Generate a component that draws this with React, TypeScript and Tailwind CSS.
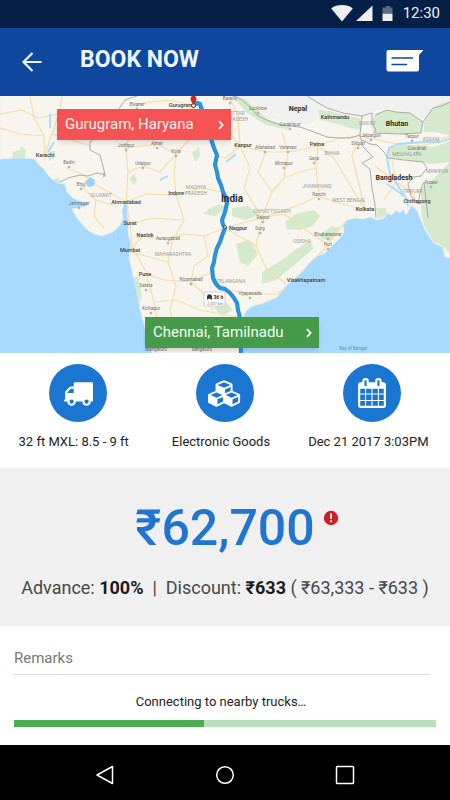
import type { ReactNode } from "react";

const LAND_WEST =
  "M0 -2 H452 V162 L445 161 443 151 438 149 433 146 427 137 423 129 420 122 417 114 411 109 409 114 406 119 403 113 400 117 396 114 392 119 388 117 384 122 377 124 370 121 363 123 355 122 347 124 343 129 344 136 339 143 333 149 325 157 317 160 310 166 300 178 292 184 287 189 277 201 270 204 263 207 252 210 246 215 243 222 241 240 242 259 H152 L149 245 143 225 140 212 137 196 133 179 129 162 131 149 128 136 129 128 127 118 128 110 125 107 122 114 123 122 120 129 113 136 102 140 95 138 89 135 83 129 77 122 72 113 78 112 86 110 90 106 83 106 73 102 67 96 65 88 59 87 53 84 49 80 43 72 38 68 35 63 25 62 13 62 0 63Z";

const GREENS = [
  "M372 24 376 18 387 14 396 16 410 17 423 26 421 37 400 38 373 36Z",
  "M432 14 440 8 452 5 V40 L436 36 424 36 424 26Z",
  "M388 51 400 49 418 49 434 51 452 44 V66 L430 68 410 64 389 62Z",
  "M421 92 432 84 452 64 V160 L444 151 433 145 424 129 421 115Z",
  "M318 14 330 15 343 19 360 22 362 34 350 32 338 28 320 24Z",
  "M234 2 245 3 256 13 268 24 290 30 288 34 264 28 246 16Z",
  "M12 62 13 56 20 54 21 50 26 54 25 62Z",
  "M47 56 55 55 55 61 49 65Z",
  "M53 84 58 82 62 86 57 88Z",
  "M192 57 199 51 200 60 195 66Z",
  "M285 126 296 118 314 114 320 120 313 130 300 134 287 133Z",
  "M236 148 250 144 258 158 248 170 240 166Z",
  "M262 176 279 166 298 152 309 145 314 152 298 166 276 184 262 188Z",
  "M318 140 332 130 340 132 330 146Z",
  "M376 112 386 112 387 119 378 123Z",
  "M210 112 220 108 227 112 215 120 203 118Z",
  "M232 112 248 110 260 118 246 124 232 120Z",
  "M130 82 134 78 137 84 133 89Z",
  "M134 182 138 180 142 200 139 208Z",
  "M214 212 226 206 233 214 222 220Z",
];

const ROADS = [
  "M0 18 22 14 38 22 58 18 80 26 118 20",
  "M30 0 34 22 44 40 45 64 M44 40 20 38 0 32",
  "M62 0 58 20 52 38 45 58 M52 38 78 46 90 50",
  "M118 14 130 24 150 20 170 28 193 10",
  "M193 10 172 4 150 6 137 8",
  "M137 8 134 26 126 52 128 76 126 106 130 128 132 150 146 176 154 206 160 240",
  "M126 52 157 48 176 58 192 40 193 10",
  "M176 58 174 78 176 99 184 124 172 146 168 166 176 190 170 214 178 250",
  "M126 106 146 98 176 99 200 92 223 96",
  "M202 14 222 26 240 50 266 56 288 56 318 50 334 62 365 114",
  "M240 50 226 62 217 60 M240 50 250 72 244 92 262 122 284 118 300 130 327 148",
  "M230 2 238 20 240 50 M266 56 258 76 272 96 262 122",
  "M318 50 316 72 319 100 342 108 365 114 M319 100 296 110 262 122",
  "M360 40 352 60 358 84 365 114 M318 50 340 42 360 40 388 46 418 52 450 40",
  "M225 132 246 126 262 122 M225 132 204 140 184 138 168 144 143 140 130 154",
  "M146 178 164 184 191 186 212 176 M191 186 206 200 213 215",
  "M220 192 248 198 278 198 300 178 327 150 345 126",
  "M154 206 176 204 200 214 240 222 M66 72 82 78 98 90 126 106",
  "M81 90 96 104 94 120 104 132 M96 104 116 110 M130 128 152 122 184 124",
  "M392 64 396 86 412 96 417 108 M375 70 396 86 M396 86 384 104",
  "M143 70 160 76 176 58 M143 70 128 76 M157 48 146 32 150 20",
  "M288 56 284 82 272 96 M316 72 300 76 284 82 M282 36 288 56",
  "M204 140 208 160 194 170 191 186 M168 166 146 160 130 156",
  "M262 122 256 150 266 172 286 188 M256 150 225 132",
];

const RIVERS = [
  "M452 42 440 46 424 46 410 47 398 48 389 52 387 62 390 78 398 90 406 102 408 110",
  "M387 88 396 94 404 100",
  "M50 18 50 32 M54 46 48 56",
  "M226 66 236 58 M168 80 160 84",
];

const BORDERS = [
  "M137 0 125 4 118 14 112 28 100 38 90 46 90 54 100 59 103 70 105 79 97 77 88 80 80 79 68 82 60 86",
  "M233 -1 242 4 250 11 258 20 267 24 280 29 300 31 314 36 327 41 340 42 350 42 360 39 362 20 343 17 327 12 310 2 306 -1",
  "M362 20 372 17 372 28 376 34 374 37 400 38 421 37 423 26 410 17 396 16 387 14 375 19",
  "M423 26 433 12 442 10 452 5",
  "M360 39 363 51 373 61 362 67 370 73 372 92 375 109 376 122",
  "M362 44 370 48 377 49 384 56 388 62 404 64 423 66 427 72 421 80 413 81 408 88 411 100 418 108 421 92 424 86 428 122",
];

const ROUTE =
  "M194 9 197 7 200 8 202 14 206 28 212 46 214 52 217 59 216 64 215 69 217 76 218 82 221 89 223 96 226 102 227 107 225 116 222 124 223 129 225 132 222 140 220 146 217 152 215 159 214 166 212 172 213 182 216 188 220 192 225 193 230 197 234 202 237 207 238 214 240 222 241 258";

type Label = [x: number, y: number, text: string];

const COUNTRIES: Label[] = [
  [298, 15, "Nepal"],
  [397, 30, "Bhutan"],
  [394, 84, "Bangladesh"],
];

const CITIES: Label[] = [
  [181, 11, "Gurugram"],
  [45, 61, "Karachi"],
  [126, 108, "Ahmedabad"],
  [130, 129, "Surat"],
  [243, 51, "Kanpur"],
  [176, 99, "Indore"],
  [317, 50, "Patna"],
  [335, 23, "Kathmandu"],
  [365, 115, "Kolkata"],
  [417, 107, "Chittagong"],
  [238, 134, "Nagpur"],
  [145, 141, "Nashik"],
  [130, 156, "Mumbai"],
  [145, 180, "Pune"],
  [306, 186, "Visakhapatnam"],
];

const TOWNS: Label[] = [
  [137, 10, "Bikaner"],
  [126, 51, "Jodhpur"],
  [143, 69, "Udaipur"],
  [157, 49, "Ajmer"],
  [176, 57, "Kota"],
  [230, 4, "Bareilly"],
  [258, 14, "Lucknow"],
  [265, 53, "Allahabad"],
  [288, 53, "Varanasi"],
  [284, 69, "Mirzapur"],
  [290, 30, "Gorakhpur"],
  [314, 64, "Gaya"],
  [319, 100, "Ranchi"],
  [358, 49, "Siliguri"],
  [412, 42, "Tezpur"],
  [417, 54, "Guwahati"],
  [431, 88, "Aizawl"],
  [371, 41, "Jalpaiguri"],
  [263, 123, "Raipur"],
  [260, 134, "Durg"],
  [168, 144, "Aurangabad"],
  [191, 185, "Nizamabad"],
  [250, 199, "Vijayawada"],
  [328, 140, "Bhubaneswar"],
  [328, 150, "Puri"],
  [69, 68, "Badin"],
  [81, 90, "Bhuj"],
  [79, 109, "Jamnagar"],
  [146, 191, "Satara"],
  [151, 214, "Kolhapur"],
  [156, 255, "Mangaluru"],
  [202, 255, "Bengaluru"],
];

const STATES: Label[] = [
  [101, 101, "GUJARAT"],
  [237, 19, "UTTAR"],
  [237, 25, "PRADESH"],
  [196, 93, "MADHYA"],
  [196, 99, "PRADESH"],
  [272, 117, "CHHATTISGARH"],
  [332, 59, "BIHAR"],
  [367, 29, "SIKKIM"],
  [431, 45, "ASSAM"],
  [407, 60, "MEGHALAYA"],
  [317, 92, "JHARKHAND"],
  [349, 106, "WEST BENGAL"],
  [413, 97, "TRIPURA"],
  [437, 77, "MANIPUR"],
  [173, 160, "MAHARASHTRA"],
  [231, 187, "TELANGANA"],
  [302, 147, "ODISHA"],
];

function RouteMap() {
  return (
    <svg
      className="block h-full w-full font-[Roboto,sans-serif]"
      viewBox="0 0 450 257"
      preserveAspectRatio="xMidYMid slice"
      role="img"
      aria-label="Route from Gurugram to Chennai"
    >
      <rect width="450" height="257" fill="#a8d9ff" />
      <clipPath id="land">
        <path d={LAND_WEST} />
      </clipPath>
      <path d={LAND_WEST} fill="#f8f5ee" stroke="#e6eee9" strokeWidth="1" />
      <g clipPath="url(#land)">
        <path d="M233 -2 250 9 268 22 300 28 H310 L327 12 362 18 390 12 425 22 452 4 V-2Z" fill="#f0f0ee" />
        {GREENS.map((d) => (
          <path key={d} d={d} fill="#cfe8c6" opacity="0.85" />
        ))}
        {ROADS.map((d) => (
          <path key={d} d={d} fill="none" stroke="#f6dda6" strokeWidth="1.2" strokeLinejoin="round" />
        ))}
        {RIVERS.map((d) => (
          <path key={d} d={d} fill="none" stroke="#a8d9ff" strokeWidth="1.8" strokeLinejoin="round" />
        ))}
        <path d="M85 86 90 81 95 84 94 90 88 91Z M103 76 106 80 103 82Z M122 116 124 107 127 112 126 120Z" fill="#9bd1fb" />
        {BORDERS.map((d) => (
          <path key={d} d={d} fill="none" stroke="#a3a3a0" strokeWidth="0.9" strokeLinejoin="round" />
        ))}
      </g>
      <g textAnchor="middle">
        <g fontSize="5" fill="#9a9a98">
          {STATES.map(([x, y, text]) => (
            <text key={`${text}${x}`} x={x} y={y}>
              {text}
            </text>
          ))}
        </g>
        <g fontSize="4.5" fill="#6f6f6d">
          {TOWNS.map(([x, y, text]) => (
            <g key={text}>
              <text x={x} y={y}>
                {text}
              </text>
              <circle cx={x} cy={y + 3} r="0.9" fill="#fff" stroke="#777" strokeWidth="0.6" />
            </g>
          ))}
        </g>
        <g fontSize="5.5" fontWeight="500" fill="#3c3c3c">
          {CITIES.map(([x, y, text]) => (
            <text key={text} x={x} y={y}>
              {text}
            </text>
          ))}
        </g>
        <g fontSize="7" fontWeight="700" fill="#2c2c2c">
          {COUNTRIES.map(([x, y, text]) => (
            <text key={text} x={x} y={y}>
              {text}
            </text>
          ))}
        </g>
        <text x="353" y="254" fontSize="4.5" fill="#5a93c4">
          Bay of Bengal
        </text>
      </g>
      <path d={ROUTE} fill="none" stroke="#2083cf" strokeWidth="4" strokeLinejoin="round" />
      <path d={ROUTE} fill="none" stroke="#2a97e0" strokeWidth="2.4" strokeLinejoin="round" />
      <circle cx="225" cy="131" r="1.4" fill="#fff" stroke="#444" strokeWidth="0.9" />
      <text x="232" y="106" textAnchor="middle" fontSize="10" fontWeight="700" fill="#2c2c2c">
        India
      </text>
      <circle cx="193.500" cy="9.500" r="2" fill="#fff" stroke="#333" strokeWidth="1" />
      <path d="M193.500 9C192 6 190.500 5 190.500 2.800a3 3 0 0 1 6 0C196.500 5 195 6 193.500 9Z" fill="#d3261f" />
      <g>
        <path d="M204 196H225V210H204Z" fill="#fff" stroke="#c9c9c9" strokeWidth="0.8" />
        <path d="M207 200.500l.8-2h3.400l.8 2v3h-1.200v-.8h-2.600v.8H207Z" fill="#333" />
        <text x="213.500" y="203" fontSize="5" fontWeight="700" fill="#333">
          36 h
        </text>
        <text x="207" y="208.500" fontSize="4" fill="#777">
          2,207 km
        </text>
      </g>
    </svg>
  );
}

function Chevron() {
  return (
    <svg className="h-2.5 w-2" viewBox="0 0 8 10" fill="none" stroke="#fff" strokeWidth="1.8" aria-hidden="true">
      <path d="M2 1.200 5.600 5 2 8.800" />
    </svg>
  );
}

function StatusBar() {
  return (
    <div className="flex h-7 items-center justify-end bg-[#061f47] pr-2.5 pb-0.5 text-[#eef1f6]">
      <svg className="h-4 w-[62px]" viewBox="0 0 62 16" fill="#eceef2" aria-hidden="true">
        <path d="M11 16.500.2 3.400C6-1 16-1 21.800 3.400Z" />
        <path d="M41.500.5V16.500H24.500Z" />
        <path d="M55 1h4v1.500h2.500V8h-10V2.500H55Z" fill="#5f6b84" />
        <path d="M51.500 8.500h10V16h-10Z" />
      </svg>
      <span className="ml-2.5 text-[15px] leading-6">12:30</span>
    </div>
  );
}

function AppBar() {
  return (
    <header className="flex h-17 items-center bg-[#0f479f] pr-6.5 pl-5">
      <button type="button" aria-label="Back" className="flex size-6 items-center justify-center">
        <svg className="size-6" viewBox="0 0 24 24" fill="none" stroke="#e6f3ff" strokeWidth="2.200" aria-hidden="true">
          <path d="M21.500 12H4M12.500 3 3.500 12 12.500 21" />
        </svg>
      </button>
      <h1 className="ml-9 pb-1 text-[23px] leading-7 font-bold text-[#eef7ff]">BOOK NOW</h1>
      <button type="button" aria-label="Messages" className="ml-auto">
        <svg className="h-6 w-[38px]" viewBox="0 0 38 24" aria-hidden="true">
          <path d="M2.500 0H37.500L33 5V19.500Q33 21.500 31 21.500H2.500Q.5 21.500.5 19.500V2Q.5 0 2.500 0Z" fill="#fff" />
          <path d="M5.500 8H27M5.500 14.500H21" stroke="#0f479f" strokeWidth="1.600" />
        </svg>
      </button>
    </header>
  );
}

const TRUCK =
  "M640 1408q0-52-38-90t-90-38-90 38-38 90 38 90 90 38 90-38 38-90zm-384-512h384v-256h-158q-13 0-22 9l-195 195q-9 9-9 22v30zm1280 512q0-52-38-90t-90-38-90 38-38 90 38 90 90 38 90-38 38-90zm256-1088v1024q0 15-4 26.500t-13.500 18.500-16.500 11.500-23.500 6-22.500 2-25.500 0-22.500-.5q0 106-75 181t-181 75-181-75-75-181h-384q0 106-75 181t-181 75-181-75-75-181h-64q-3 0-22.500.5t-25.500 0-22.500-2-23.500-6-16.500-11.500-13.500-18.500-4-26.500q0-26 19-45t45-19v-320q0-8-.5-35t0-38 2.500-34.500 6.500-37 14-30.500 22.500-30l198-198q19-19 50.500-32t58.500-13h160v-192q0-26 19-45t45-19h1024q26 0 45 19t19 45z";
const CUBES =
  "M640 1632l384-192v-314l-384 164v342zm-64-454l404-173-404-173-404 173zm1088 454l384-192v-314l-384 164v342zm-64-454l404-173-404-173-404 173zm-448-293l384-165v-266l-384 164v267zm-64-379l441-189-441-189-441 189zm1088 518v416q0 36-19 67t-52 47l-448 224q-25 14-57 14t-57-14l-448-224q-4-2-7-4-2 2-7 4l-448 224q-25 14-57 14t-57-14l-448-224q-33-16-52-47t-19-67v-416q0-38 21.500-70t56.500-48l434-186v-400q0-38 21.500-70t56.500-48l448-192q23-10 50-10t50 10l448 192q35 16 56.500 48t21.500 70v400l434 186q36 16 57 48t21 70z";
const CALENDAR =
  "M192 1664h288v-288h-288v288zm352 0h320v-288h-320v288zm-352-352h288v-320h-288v320zm352 0h320v-320h-320v320zm-352-384h288v-288h-288v288zm736 736h320v-288h-320v288zm-384-736h320v-288h-320v288zm768 736h288v-288h-288v288zm-384-352h320v-320h-320v320zm-352-864v-288q0-13-9.500-22.500t-22.500-9.500h-64q-13 0-22.500 9.500t-9.500 22.500v288q0 13 9.500 22.500t22.500 9.500h64q13 0 22.500-9.500t9.500-22.500zm736 864h288v-320h-288v320zm-384-384h320v-288h-320v288zm384 0h288v-288h-288v288zm32-480v-288q0-13-9.500-22.500t-22.500-9.500h-64q-13 0-22.500 9.500t-9.500 22.500v288q0 13 9.500 22.500t22.500 9.500h64q13 0 22.500-9.500t9.500-22.500zm384-64v1280q0 52-38 90t-90 38h-1408q-52 0-90-38t-38-90v-1280q0-52 38-90t90-38h128v-96q0-66 47-113t113-47h64q66 0 113 47t47 113v96h384v-96q0-66 47-113t113-47h64q66 0 113 47t47 113v96h128q52 0 90 38t38 90z";

function Detail({ icon, children }: { icon: ReactNode; children: ReactNode }) {
  return (
    <li className="flex flex-col items-center">
      <div className="pl-2">
        <div className="flex size-[58px] items-center justify-center rounded-full bg-[#1b76d2]">{icon}</div>
      </div>
      <span className="mt-2.5 text-[13px] leading-5 whitespace-nowrap text-[#222]">{children}</span>
    </li>
  );
}

export default function App() {
  return (
    <div className="flex min-h-screen w-full flex-col bg-white font-[Roboto,sans-serif]">
      <StatusBar />
      <AppBar />

      <main className="flex flex-1 flex-col">
        <section className="relative h-[257px] overflow-hidden">
          <RouteMap />
          <button
            type="button"
            className="absolute top-[13px] left-[57px] flex h-[31px] w-[174px] items-center justify-between bg-[#f55353] pr-1.5 pl-2 text-[15px] text-[#fff1ee] shadow-md"
          >
            Gurugram, Haryana
            <Chevron />
          </button>
          <button
            type="button"
            className="absolute top-[221px] left-[145px] flex h-[31px] w-[174px] items-center justify-between bg-[#469b4b] pr-1.5 pl-2 text-[15px] text-[#f1fff0] shadow-md"
          >
            Chennai, Tamilnadu
            <Chevron />
          </button>
        </section>

        <ul className="grid h-[115px] grid-cols-3 pt-[11px] pr-2">
          <Detail
            icon={
              <svg className="size-[30px]" viewBox="0 0 1792 1792" fill="#fff" aria-hidden="true">
                <path d={TRUCK} />
              </svg>
            }
          >
            32 ft MXL: 8.5 - 9 ft
          </Detail>
          <Detail
            icon={
              <svg className="h-[27px] w-[34px]" viewBox="0 0 2304 1792" fill="#fff" aria-hidden="true">
                <path d={CUBES} />
              </svg>
            }
          >
            Electronic Goods
          </Detail>
          <Detail
            icon={
              <svg className="size-[30px]" viewBox="0 0 1792 1792" fill="#fff" aria-hidden="true">
                <path d={CALENDAR} />
              </svg>
            }
          >
            Dec 21 2017 3:03PM
          </Detail>
        </ul>

        <section className="flex h-[158px] flex-col items-center bg-[#f0f0f0] pt-7">
          <div className="flex items-start pl-6">
            <p className="text-[50px] leading-16 font-medium text-[#1f75cf]">₹62,700</p>
            <button type="button" aria-label="Price details" className="mt-3.5 ml-2">
              <svg className="size-4" viewBox="0 0 16 16" aria-hidden="true">
                <circle cx="8" cy="8" r="7.200" fill="#cf1f25" />
                <path d="M7 3.500h2v5.500H7ZM7 10.300h2v2H7Z" fill="#fbe9e9" />
              </svg>
            </button>
          </div>
          <p className="mt-4 text-lg leading-6 whitespace-pre text-[#484848]">
            Advance: <b className="text-[#1c1c1c]">100%</b>
            {"  |  "}Discount: <b className="text-[#1c1c1c]">₹633</b> ( ₹63,333 - ₹633 )
          </p>
        </section>

        <section className="flex h-[119px] flex-col pt-5 pr-3.5 pl-3.5">
          <input
            type="text"
            aria-label="Remarks"
            placeholder="Remarks"
            className="mr-1.5 h-[29px] border-b border-[#dcdcdc] pb-1 text-[15px] outline-none placeholder:text-[#777]"
          />
          <p className="mt-[17px] pr-2 text-center text-[13px] leading-5 text-[#222]">Connecting to nearby trucks…</p>
          <div
            role="progressbar"
            aria-label="Connecting to nearby trucks"
            aria-valuenow={45}
            aria-valuemin={0}
            aria-valuemax={100}
            className="mt-2 h-[7px] bg-[#b9deba]"
          >
            <div className="h-full w-[45%] bg-[#4bae50]" />
          </div>
        </section>
      </main>

      <nav className="flex h-[55px] items-center justify-center gap-20 bg-black pt-1">
        <button type="button" aria-label="Back" className="flex w-10 justify-center">
          <svg className="size-5" viewBox="0 0 20 20" fill="none" stroke="#fff" strokeWidth="1.500" aria-hidden="true">
            <path d="M17.500 1.500V18.500L2 10Z" strokeLinejoin="round" />
          </svg>
        </button>
        <button type="button" aria-label="Home" className="flex w-10 justify-center">
          <svg className="size-5" viewBox="0 0 20 20" fill="none" stroke="#fff" strokeWidth="1.500" aria-hidden="true">
            <circle cx="10" cy="10" r="8.300" />
          </svg>
        </button>
        <button type="button" aria-label="Recent apps" className="flex w-10 justify-center">
          <svg className="size-5" viewBox="0 0 20 20" fill="none" stroke="#fff" strokeWidth="1.500" aria-hidden="true">
            <rect x="1.500" y="1.500" width="17" height="17" rx="0.800" />
          </svg>
        </button>
      </nav>
    </div>
  );
}
